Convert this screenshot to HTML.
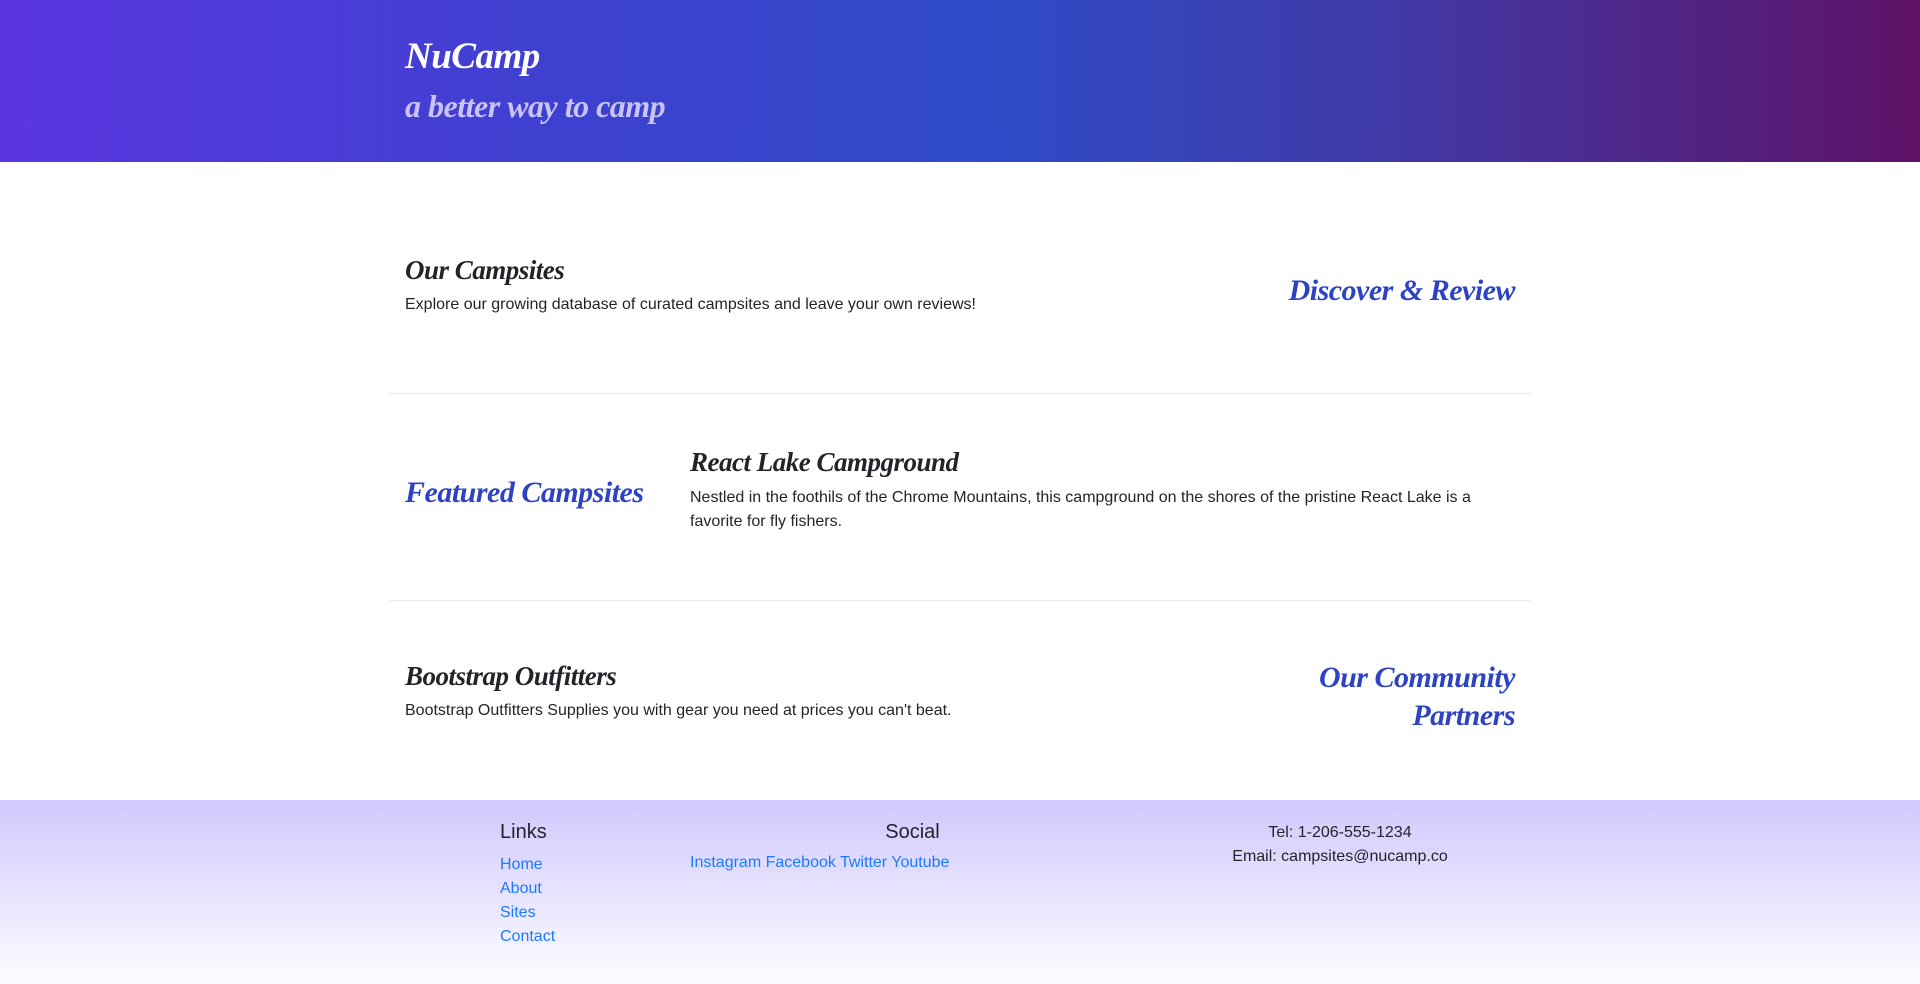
<!DOCTYPE html>
<html><head><meta charset="utf-8"><style>
*{box-sizing:border-box;margin:0;padding:0}
body{width:1920px;height:984px;overflow:hidden;font-family:"Liberation Sans",sans-serif;color:#212529;font-size:16px;background:#fff;position:relative}
.cur{font-family:"Liberation Serif",serif;font-style:italic;font-weight:bold;letter-spacing:-0.5px}
header{height:162px;background:linear-gradient(90deg,#5b36e0 0%,#3d41cf 30%,#2f4bc7 52%,#403aa8 72%,#5e1266 100%);position:relative}
.abs{position:absolute}
hr{position:absolute;left:390px;width:1140px;border:0;border-top:1px solid #e9e9e9}
footer{position:absolute;top:800px;left:0;width:1920px;height:184px;background:linear-gradient(180deg,#d0c9fd 0%,#fdfcff 100%)}
a{color:#1a7bff;text-decoration:none}
</style></head><body>
<header>
<div class="abs cur" style="left:405px;top:35px;font-size:37px;color:#fff">NuCamp</div>
<div class="abs cur" style="left:405px;top:88px;font-size:32px;color:#c9c3f8">a better way to camp</div>
</header>
<div class="abs cur" style="left:405px;top:255px;font-size:27px">Our Campsites</div>
<div class="abs" style="left:405px;top:296px">Explore our growing database of curated campsites and leave your own reviews!</div>
<div class="abs cur" style="right:405px;top:274px;font-size:30px;color:#2d43c2">Discover &amp; Review</div>
<hr style="top:393px">
<div class="abs cur" style="left:405px;top:476px;font-size:30px;color:#2d43c2">Featured Campsites</div>
<div class="abs cur" style="left:690px;top:447px;font-size:27px">React Lake Campground</div>
<div class="abs" style="left:690px;top:486px;width:830px;line-height:24px">Nestled in the foothils of the Chrome Mountains, this campground on the shores of the pristine React Lake is a favorite for fly fishers.</div>
<hr style="top:600px">
<div class="abs cur" style="left:405px;top:661px;font-size:27px">Bootstrap Outfitters</div>
<div class="abs" style="left:405px;top:702px">Bootstrap Outfitters Supplies you with gear you need at prices you can't beat.</div>
<div class="abs cur" style="right:405px;top:659px;font-size:30px;color:#2d43c2;text-align:right;line-height:38px">Our Community<br>Partners</div>
<footer>
<div class="abs" style="left:500px;top:21px;font-size:20px">Links</div>
<div class="abs" style="left:500px;top:53px;line-height:24px"><a>Home</a><br><a>About</a><br><a>Sites</a><br><a>Contact</a></div>
<div class="abs" style="left:675px;width:475px;top:21px;font-size:20px;text-align:center">Social</div>
<div class="abs" style="left:690px;top:54px"><a>Instagram</a> <a>Facebook</a> <a>Twitter</a> <a>Youtube</a></div>
<div class="abs" style="left:1150px;width:380px;top:21px;text-align:center;line-height:24px">Tel: 1-206-555-1234<br>Email: campsites@nucamp.co</div>
</footer>
</body></html>
